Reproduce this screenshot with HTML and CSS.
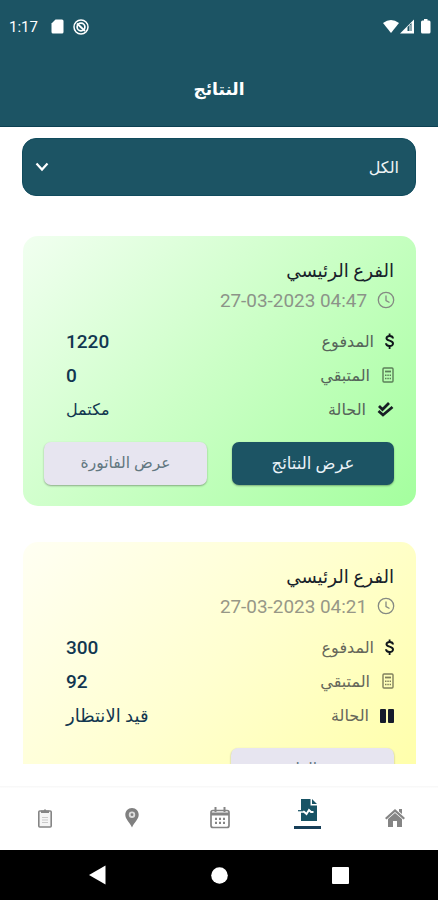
FILE: index.html
```html
<!DOCTYPE html>
<html lang="ar" dir="rtl">
<head>
<meta charset="utf-8">
<title>النتائج</title>
<link rel="stylesheet" href="styles.css">
</head>
<body>
<header class="top">
  <div class="status" dir="ltr">
    <span class="time">1:17</span>
    <svg class="sd" width="13" height="15" viewBox="0 0 13 15"><path d="M4.500 .5H11Q12.500 .5 12.500 2V13Q12.500 14.500 11 14.500H2Q.5 14.500 .5 13V4.500Z" fill="#fff"/></svg>
    <svg class="sync" width="16" height="16" viewBox="0 0 16 16" fill="none" stroke="#fff"><circle cx="8" cy="8" r="7" stroke-width="1.500"/><circle cx="8" cy="8" r="3.900" stroke-width="1.700"/><path d="M4 4.500L12 12" stroke-width="1.800"/></svg>
    <svg class="signals" width="48" height="16" viewBox="0 0 48 16" fill="#fff"><path d="M0 4Q8-2 16 4L8 14Z"/><path d="M17 14.500L31 .5V14.500Z"/><path d="M24.500 12V8L28.500 4V12Z" fill="#1c5464"/><path d="M27 6V12" stroke="#fff"/><path d="M39.500 1.500H41V0H44.500V1.500H46Q47.500 1.500 47.500 3V13Q47.500 14.500 46 14.500H39.500Q38 14.500 38 13V3Q38 1.500 39.500 1.500Z"/></svg>
  </div>
  <h1><span>النتائج</span></h1>
</header>
<main class="content">
  <div class="select"><span>الكل</span><svg width="14" height="10" viewBox="0 0 14 10"><path d="M1.500 1.500L7 7.500L12.500 1.500" fill="none" stroke="#fff" stroke-width="2.200"/></svg></div>
  <section class="card green">
    <h2><span>الفرع الرئيسي</span></h2>
    <div class="date"><svg width="18" height="18" viewBox="0 0 18 18"><use href="#clock"/></svg><span dir="ltr">27-03-2023 04:47</span></div>
    <dl>
      <div class="row"><dt><svg width="9" height="18" viewBox="0 0 9 18"><use href="#dollar"/></svg><span>المدفوع</span></dt><dd>1220</dd></div>
      <div class="row"><dt class="rest"><svg width="12" height="16" viewBox="0 0 12 16"><use href="#calc"/></svg><span>المتبقي</span></dt><dd>0</dd></div>
      <div class="row"><dt class="state"><svg width="17" height="17" viewBox="0 0 17 17"><path d="M2 5L5.500 8.500L12 2M1.500 10L6 14L15.500 6" fill="none" stroke="#171d24" stroke-width="2.800"/></svg><span>الحالة</span></dt><dd class="ar">مكتمل</dd></div>
    </dl>
    <div class="actions"><button class="primary">عرض النتائج</button><button>عرض الفاتورة</button></div>
  </section>
  <section class="card yellow">
    <h2><span>الفرع الرئيسي</span></h2>
    <div class="date"><svg width="18" height="18" viewBox="0 0 18 18"><use href="#clock"/></svg><span dir="ltr">27-03-2023 04:21</span></div>
    <dl>
      <div class="row"><dt><svg width="9" height="18" viewBox="0 0 9 18"><use href="#dollar"/></svg><span>المدفوع</span></dt><dd>300</dd></div>
      <div class="row"><dt class="rest"><svg width="12" height="16" viewBox="0 0 12 16"><use href="#calc"/></svg><span>المتبقي</span></dt><dd>92</dd></div>
      <div class="row"><dt class="state"><svg width="14" height="14" viewBox="0 0 14 14" fill="#151b2b"><rect width="6" height="14" rx="1"/><rect x="8" width="6" height="14" rx="1"/></svg><span>الحالة</span></dt><dd class="ar pending">قيد الانتظار</dd></div>
    </dl>
    <div class="actions"><button>عرض الفاتورة</button></div>
  </section>
</main>
<nav class="tabs">
  <a><svg width="20" height="20" viewBox="0 0 20 20" fill="#858585"><path d="M0 10L10 1L20 10L18.500 11.500L10 4L1.500 11.500ZM14 1H17V6L14 3.500Z"/><path d="M3 11L10 5L17 11V19H12V13H8V19H3Z"/></svg></a>
  <a class="active"><svg width="20" height="22" viewBox="0 0 20 22"><path d="M3 0H12.500V6.500H19V22H3ZM14 0L19 5H14Z" fill="#175365"/><path d="M2 12.700H6L8.500 15L11 11L13 13H15.500" fill="none" stroke="#fff" stroke-width="2"/><path d="M0 11.700H5" stroke="#175365" stroke-width="1.200"/></svg><i></i></a>
  <a><svg width="20" height="22" viewBox="0 0 20 22" fill="none" stroke="#858585"><rect x="1" y="3.500" width="18" height="17" rx="2" stroke-width="1.700"/><path d="M1 7H19" stroke-width="3"/><path d="M5.500 0V5M14.500 0V5" stroke-width="2"/><path d="M5 11.800H15M5 15.800H15" stroke-width="2.200" stroke-dasharray="2 2"/></svg></a>
  <a><svg width="14" height="20" viewBox="0 0 14 20"><path d="M7 0C3 0 .3 3 .3 6.800C.3 11 4 13.500 7 19.500C10 13.500 13.700 11 13.700 6.800C13.700 3 11 0 7 0Z" fill="#808080"/><circle cx="7" cy="6.700" r="3.200" fill="#ddd"/><circle cx="7" cy="6.700" r="1.400" fill="#808080"/></svg></a>
  <a><svg width="14" height="19" viewBox="0 0 14 19"><rect x=".8" y="2" width="12.400" height="16" rx="1" fill="#f5f5f5" stroke="#858585" stroke-width="1.600"/><path d="M3 1.500H5.500L7 0L8.500 1.500H11V4H3Z" fill="#858585"/><path d="M4 8.500H10M4 11H10M4 13.500H10" stroke="#c9c9c9"/></svg></a>
</nav>
<footer class="system" dir="ltr">
  <svg width="17" height="20" viewBox="0 0 17 20"><path d="M0 10L16.500 .5V19.500Z" fill="#fff"/></svg>
  <svg width="17" height="17" viewBox="0 0 17 17"><circle cx="8.500" cy="8.500" r="8.300" fill="#fff"/></svg>
  <svg width="17" height="17" viewBox="0 0 17 17"><rect width="17" height="17" rx="1" fill="#fff"/></svg>
</footer>
<svg width="0" height="0" class="defs"><defs>
  <g id="clock" fill="none" stroke="#858a83" stroke-width="1.300"><circle cx="9" cy="9" r="7.700"/><path d="M9 4.500V9.500L12.500 11.500"/></g>
  <g id="dollar" fill="none" stroke="#10161b"><path d="M8 6.500C7.700 3.200 1.500 3.400 1.500 6.200C1.500 9.300 8 8 8 11.500C8 15 1.200 15 1 11.300" stroke-width="2"/><path d="M4.600 1.500V4M4.600 14V17" stroke-width="1.800"/></g>
  <g id="calc" fill="none" stroke="#000" stroke-opacity=".5"><rect x="1" y="1" width="10" height="14" rx="1" stroke-width="1.400"/><path d="M3 4.500H9" stroke-width="1.800"/><path d="M3 8.300H9M3 11.500H9" stroke-width="1.400" stroke-dasharray="1.500 .8"/></g>
</defs></svg>
</body>
</html>
```
FILE: styles.css
```css
* { box-sizing: border-box; }
body { margin: 0; width: 438px; height: 900px; overflow: hidden; display: flex; flex-direction: column; background: #fff; font-family: Roboto, "DejaVu Sans", sans-serif; color: #18212a; }
svg { display: block; flex: none; }
h1, h2, dl, dd { margin: 0; font-weight: 500; }
.defs { position: absolute; }
.top { height: 127px; flex: none; background: #1c5464; border-bottom: 1px solid #0c4052; color: #fff; }
.status { height: 53px; display: flex; align-items: center; padding: 0 7px 0 9px; }
.time { font-size: 15px; width: 42px; }
.sync { margin-left: 9px; }
.signals { margin-left: auto; }
h1 { height: 72px; display: flex; align-items: center; justify-content: center; font-size: 17px; font-weight: 700; }
.content { height: 637px; flex: none; overflow: hidden; padding: 11px 22px 0 22px; }
.select { height: 58px; border-radius: 14px; background: #1c5464; border: 1px solid #104b5d; color: #eef4f6; display: flex; align-items: center; justify-content: space-between; padding: 0 16px 0 12px; font-size: 16px; }
.card { height: 270px; margin: 40px 0 0 1px; border-radius: 15px; padding: 20px 22px 0 21px; }
.card + .card { margin-top: 36px; }
.green { background: linear-gradient(135deg, #f1fff0 0%, #ccffc7 48%, #a4ff9e 100%); }
.yellow { background: linear-gradient(135deg, #fffff3 0%, #ffffd0 48%, #ffffa5 100%); }
h2 { height: 30px; line-height: 30px; font-size: 18.2px; font-weight: 400; }
.date { height: 28px; display: flex; align-items: center; gap: 10px; margin-right: -1px; font-size: 18.9px; color: #8c9389; }
.yellow .date { color: #979787; }
dl { margin-top: 10px; }
.row { height: 34.3px; display: grid; grid-template-columns: 1fr 120px; align-items: center; }
dt { display: flex; align-items: center; gap: 11px; font-size: 16px; color: #56645a; }
.yellow dt { color: #66675a; }
dt.rest { gap: 12px; }
dt.state { gap: 11px; }
dd { direction: ltr; padding-left: 22px; font-size: 19px; font-weight: 500; color: #123750; white-space: nowrap; }
dd.ar { font-size: 16px; font-weight: 400; }
dd.pending { font-size: 18px; }
.actions { margin-top: 15px; display: flex; justify-content: space-between; }
button { width: 163px; height: 43px; border: 0; padding: 0; border-radius: 7px; background: #e7e5f0; color: #627780; font: inherit; font-size: 15.5px; box-shadow: 0 1px 2px #0005; }
button.primary { width: 162px; font-size: 16.5px; background: #1c5464; color: #eaf2f8; }
.tabs { height: 86px; flex: none; display: grid; grid-template-columns: repeat(5, 87.600px); border-top: 22px solid #fff; background: linear-gradient(#f8f8f8 1px, #fff 2px); }
.tabs a { display: flex; flex-direction: column; align-items: center; justify-content: center; padding-left: 2px; }
.tabs a.active { padding-bottom: 8px; }
.tabs i { width: 27px; height: 3px; background: #163e58; margin-top: 5px; }
.system { height: 50px; flex: none; background: #000; display: flex; align-items: center; justify-content: space-between; padding: 0 89px 0 89px; }
```
